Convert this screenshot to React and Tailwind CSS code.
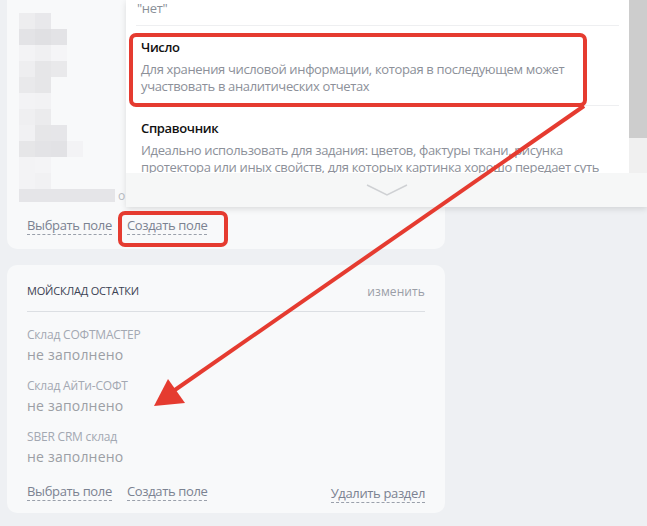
import React from 'react';

// пикселизованный (замазанный) блок в первой карточке
const blurRows = [
  ['bg-[#ededef]', 'bg-[#e8e8eb]', ''],
  ['bg-[#e3e3e6]', 'bg-[#e0e0e3]', 'bg-[#e3e3e6]'],
  ['bg-[#f3f3f5]', 'bg-[#f0f0f2]', 'bg-[#f5f5f7]'],
  ['bg-[#eeeef0]', 'bg-[#e6e6e8]', 'bg-[#e9e9eb]'],
  ['bg-[#e9e9eb]', 'bg-[#e6e6e8]', ''],
  ['bg-[#f3f3f5]', 'bg-[#f2f2f4]', ''],
  ['bg-[#efeff1]', 'bg-[#ebebed]', ''],
  ['bg-[#f1f1f3]', 'bg-[#e6e6e8]', 'bg-[#e6e6e9]'],
  ['bg-[#e6e6e8]', 'bg-[#e3e3e6]', 'bg-[#e2e2e5]', 'bg-[#f3f3f5]'],
  ['bg-[#f3f3f5]', 'bg-[#f4f4f6]', ''],
  ['bg-[#f3f3f5]', 'bg-[#f1f1f3]', ''],
];

const fields = [
  { label: 'Склад СОФТМАСТЕР', value: 'не заполнено' },
  { label: 'Склад АйТи-СОФТ', value: 'не заполнено' },
  { label: 'SBER CRM склад', value: 'не заполнено' },
];

function DashLink({ children }) {
  return (
    <span className="text-[13px] text-[#7b8291] tracking-[-0.35px] border-b border-dashed border-[#9aa0ab] leading-[17px] cursor-pointer">
      {children}
    </span>
  );
}

export default function App() {
  return (
    <div
      className="relative w-[647px] h-[526px] overflow-hidden bg-[#eef0f3] pl-[7px]"
      style={{ fontFamily: '"Open Sans", "Noto Sans", sans-serif' }}
    >
      {/* ===== Карточка 1 ===== */}
      <div className="w-[438px] h-[249px] bg-[#f8f9fa] rounded-b-[10px] flex flex-col px-[12px] pt-[13px]">
        <div className="flex flex-col">
          {blurRows.map((row, i) => (
            <div key={i} className="flex h-[16px]">
              {row.map((c, j) => (
                <div key={j} className={`w-[16px] h-[16px] ${c}`} />
              ))}
            </div>
          ))}
          <div className="flex items-center h-[13px]">
            <div className="w-[96px] h-[13px] bg-[#e5e5e8]" />
            <span className="text-[12px] text-[#b9bcc2] ml-[3px]">о</span>
          </div>
        </div>
        <div className="flex gap-[15px] mt-[15px] px-[8px]">
          <DashLink>Выбрать поле</DashLink>
          <DashLink>Создать поле</DashLink>
        </div>
      </div>

      {/* ===== Карточка 2 ===== */}
      <div className="w-[438px] h-[248px] mt-[16px] bg-[#f8f9fa] rounded-[10px] px-[20px] pt-[19px] flex flex-col">
        <div className="flex justify-between items-center h-[15px]">
          <span className="text-[11px] font-medium text-[#3b4252] tracking-[-0.2px]">МОЙСКЛАД ОСТАТКИ</span>
          <span className="text-[12px] text-[#9a9ea7] tracking-[0.1px]">изменить</span>
        </div>
        <div className="h-px bg-[#dcdfe3] mt-[12px]" />
        <div className="flex flex-col mt-[14px] gap-[10px]">
          {fields.map((f) => (
            <div key={f.label} className="flex flex-col">
              <span className="text-[12px] text-[#a3a8b2] leading-[17px] tracking-[-0.2px]">{f.label}</span>
              <span className="text-[14px] text-[#9c9fa5] leading-[24px] tracking-[0.2px]">{f.value}</span>
            </div>
          ))}
        </div>
        <div className="flex items-center gap-[15px] mt-[11px]">
          <DashLink>Выбрать поле</DashLink>
          <DashLink>Создать поле</DashLink>
          <span className="ml-auto">
            <DashLink>Удалить раздел</DashLink>
          </span>
        </div>
      </div>

      {/* ===== Выпадающий список типов поля ===== */}
      <div className="absolute left-[126px] top-0 w-[521px] h-[207px] bg-white shadow-[0_2px_6px_rgba(0,0,0,0.12)] flex flex-col">
        <div className="flex h-[173px] overflow-hidden shrink-0">
          <div className="flex-1 flex flex-col px-[10px] tracking-[-0.35px]">
            <div className="h-[26px] shrink-0 flex items-start pl-[1px] border-b border-[#eeeff1]">
              <span className="text-[13px] text-[#8a8f98] leading-[17px]">"нет"</span>
            </div>
            <div className="flex flex-col shrink-0 px-[5px] pt-[13px] h-[80px] border-b border-[#eeeff1]">
              <span className="text-[13px] font-semibold text-[#111] leading-[17px]">Число</span>
              <span className="text-[13px] text-[#8c9099] leading-[17px] mt-[5px] whitespace-nowrap">
                Для хранения числовой информации, которая в последующем может
                <br />
                участвовать в аналитических отчетах
              </span>
            </div>
            <div className="flex flex-col shrink-0 px-[5px] pt-[14px]">
              <span className="text-[13px] font-semibold text-[#111] leading-[17px]">Справочник</span>
              <span className="text-[13px] text-[#8c9099] leading-[17px] mt-[5px] whitespace-nowrap">
                Идеально использовать для задания: цветов, фактуры ткани, рисунка
                <br />
                протектора или иных свойств, для которых картинка хорошо передает суть
              </span>
            </div>
          </div>
          <div className="w-[18px] flex flex-col bg-[#f0f0f0]">
            <div className="h-[138px] bg-[#cdcdcd]" />
          </div>
        </div>
        <div className="flex-1 bg-[#f6f7f7] flex items-center justify-center">
          <svg width="42" height="14" viewBox="0 0 42 14" className="-mt-[1px]">
            <path d="M1 2 L21 12 L41 2" fill="none" stroke="#cfd1d4" strokeWidth="1.5" />
          </svg>
        </div>
      </div>

      {/* ===== Красные пометки ===== */}
      <div className="absolute left-[129px] top-[33px] w-[458px] h-[74px] border-[4px] border-[#e53b30] rounded-[7px]" />
      <div className="absolute left-[118px] top-[211px] w-[110px] h-[36px] border-[4px] border-[#e53b30] rounded-[7px]" />
      <svg className="absolute left-0 top-0 pointer-events-none" width="647" height="526">
        <line x1="584" y1="106" x2="172" y2="392" stroke="#e53b30" strokeWidth="4" />
        <polygon points="154,406 168,379 185,403" fill="#e53b30" />
      </svg>
    </div>
  );
}
